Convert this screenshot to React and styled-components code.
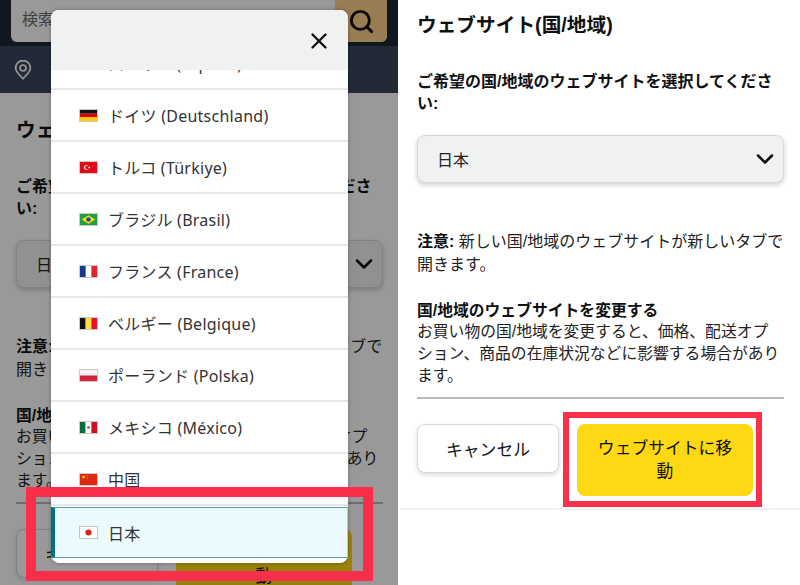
import React from 'react'
import styled, { createGlobalStyle } from 'styled-components'
import { Search, X, ChevronDown } from 'lucide-react'

const GlobalStyle = createGlobalStyle`
  html, body {
    margin: 0;
    padding: 0;
    background: #fff;
  }
  body {
    font-family: "Liberation Sans", "Noto Sans CJK JP", sans-serif;
    color: #0f1111;
  }
  * { box-sizing: border-box; }
`

const Page = styled.div`
  width: 800px;
  height: 585px;
  display: grid;
  grid-template-columns: 398px 400px;
  column-gap: 2px;
  overflow: hidden;
`

const Phone = styled.div`
  position: relative;
  height: 585px;
  overflow: hidden;
  background: #fff;
`

const TopBar = styled.div`
  height: 46px;
  background: #1b2737;
  display: flex;
  padding: 0 11px 4px;
`

const SearchBox = styled.div`
  flex: 1;
  display: flex;
  background: #fff;
  border-radius: 0 0 6px 6px;
  overflow: hidden;
`

const SearchHint = styled.div`
  flex: 1;
  padding-left: 11px;
  line-height: 40px;
  font-size: 16px;
  color: #6b6b6b;
`

const SearchButton = styled.div`
  width: 52px;
  background: #ffd089;
  display: flex;
  align-items: center;
  justify-content: center;
  color: #111;
`

const LocationBar = styled.div`
  height: 47px;
  background: #37475a;
  display: flex;
  align-items: center;
  padding-left: 14px;
  color: #fff;
`

const FormWrap = styled.section`
  padding: ${p => p.$top}px ${p => p.$right}px 12px ${p => p.$left}px;
  border-bottom: 2px solid #f0f0f0;
`

const Title = styled.h1`
  margin: 0 0 33px;
  font-size: 19.7px;
  line-height: 26px;
  font-weight: 700;
`

const Label = styled.p`
  margin: 0 0 20px;
  font-size: 16px;
  line-height: 22px;
  font-weight: 700;
`

const SelectBox = styled.div`
  height: 48px;
  padding: 0 4px 0 19px;
  display: flex;
  align-items: center;
  justify-content: space-between;
  background: #f0f2f2;
  border: 1px solid #d5d9d9;
  border-radius: 8px;
  box-shadow: 0 2px 5px rgba(15, 17, 17, 0.2);
  font-size: 16px;
  color: #222;
`

const Note = styled.p`
  margin: 47px 0 24px;
  font-size: 16px;
  line-height: 23px;
  color: #222;
  b { color: #0f1111; }
`

const Change = styled.div`
  font-size: 15.8px;
  line-height: 22px;
  color: #222;
  padding-bottom: 10px;
  border-bottom: 2px solid #b8b8b8;
  b { display: block; line-height: 21px; color: #0f1111; }
`

const Actions = styled.div`
  display: flex;
  align-items: flex-start;
  gap: 18px;
  margin-top: 25px;
`

const CancelButton = styled.button`
  width: 142px;
  height: 49px;
  background: #fff;
  border: 1px solid #d5d9d9;
  border-radius: 8px;
  box-shadow: 0 2px 5px rgba(15, 17, 17, 0.15);
  font: inherit;
  font-size: 16.8px;
  color: #0f1111;
`

const GoButton = styled.button`
  width: 176px;
  height: 72px;
  padding: 0 20px;
  background: #ffd814;
  border: none;
  border-radius: 8px;
  font: inherit;
  font-size: 16.8px;
  line-height: 23px;
  color: #0f1111;
`

const Dim = styled.div`
  position: absolute;
  inset: 0;
  background: rgba(0, 0, 0, 0.4);
`

const Modal = styled.div`
  position: absolute;
  left: 51px;
  top: 10px;
  width: 297px;
  height: 553px;
  background: #fff;
  border-radius: 8px;
  overflow: hidden;
  box-shadow: 0 0 4px rgba(0, 0, 0, 0.3);
  display: flex;
  flex-direction: column;
`

const ModalHead = styled.div`
  flex: none;
  height: 60px;
  background: #f0f2f2;
  display: flex;
  align-items: center;
  justify-content: flex-end;
  padding: 2px 16px 0 0;
  color: #111;
`

const List = styled.div`
  flex: 1;
  overflow: hidden;
`

const Row = styled.div`
  height: 52px;
  display: flex;
  align-items: center;
  gap: 10px;
  padding-left: 28px;
  border-bottom: 2px solid #e7e7e7;
  font-family: "Noto Sans", "Noto Sans CJK JP", sans-serif;
  font-size: 16px;
  letter-spacing: 0.25px;
  color: #333;
  &:first-child { margin-top: -32px; }
`

const SelectedRow = styled(Row)`
  height: 51px;
  margin-top: 1px;
  padding-left: 24px;
  background: #ebfbfd;
  border: 1px solid #5f9ea8;
  border-left: 4px solid #007185;
  border-right-color: #b9c9cc;
`

const Flag = styled.svg`
  width: 19px;
  height: 13px;
  flex: none;
  border: 1px solid rgba(90, 80, 60, 0.3);
`

const Callout = styled.div`
  position: absolute;
  left: ${p => p.$x}px;
  top: ${p => p.$y}px;
  width: ${p => p.$w}px;
  height: ${p => p.$h}px;
  border: ${p => p.$line}px solid #fb2f4a;
`

const flags = {
  es: <><rect width="19" height="13" fill="#c60b1e" /><rect y="3.2" width="19" height="6.6" fill="#ffc400" /></>,
  de: <><rect width="19" height="4.4" fill="#111" /><rect y="4.4" width="19" height="4.3" fill="#d00" /><rect y="8.7" width="19" height="4.3" fill="#fc0" /></>,
  tr: <><rect width="19" height="13" fill="#e30a17" /><circle cx="7" cy="6.5" r="2.6" fill="#fff" /><circle cx="7.8" cy="6.5" r="2" fill="#e30a17" /><circle cx="10.4" cy="6.5" r="0.9" fill="#fff" /></>,
  br: <><rect width="19" height="13" fill="#229e45" /><path d="M9.5 1.5 17 6.5 9.5 11.5 2 6.5Z" fill="#f8e509" /><circle cx="9.5" cy="6.5" r="2.6" fill="#2b49a3" /></>,
  fr: <><rect width="19" height="13" fill="#fff" /><rect width="6.3" height="13" fill="#14398f" /><rect x="12.7" width="6.3" height="13" fill="#e1232f" /></>,
  be: <><rect width="6.3" height="13" fill="#111" /><rect x="6.3" width="6.4" height="13" fill="#fae042" /><rect x="12.7" width="6.3" height="13" fill="#e8112d" /></>,
  pl: <><rect width="19" height="6.5" fill="#f4f4f4" /><rect y="6.5" width="19" height="6.5" fill="#d4213d" /></>,
  mx: <><rect width="6.3" height="13" fill="#0b6b3a" /><rect x="6.3" width="6.4" height="13" fill="#fff" /><rect x="12.7" width="6.3" height="13" fill="#ce1126" /><circle cx="9.5" cy="6.5" r="1.6" fill="#7a5a35" /></>,
  cn: <><rect width="19" height="13" fill="#de2910" /><circle cx="4" cy="3.6" r="1.6" fill="#ffde00" /><circle cx="7.5" cy="1.8" r="0.5" fill="#ffde00" /><circle cx="8.4" cy="3.4" r="0.5" fill="#ffde00" /><circle cx="8.2" cy="5.4" r="0.5" fill="#ffde00" /></>,
  jp: <><rect width="19" height="13" fill="#fff" /><circle cx="9.5" cy="6.5" r="3.5" fill="#d7261c" /></>,
}

const countries = [
  ['es', 'スペイン (España)'],
  ['de', 'ドイツ (Deutschland)'],
  ['tr', 'トルコ (Türkiye)'],
  ['br', 'ブラジル (Brasil)'],
  ['fr', 'フランス (France)'],
  ['be', 'ベルギー (Belgique)'],
  ['pl', 'ポーランド (Polska)'],
  ['mx', 'メキシコ (México)'],
  ['cn', '中国'],
]

function CountryFlag({ code }) {
  return <Flag viewBox="0 0 19 13" preserveAspectRatio="none">{flags[code]}</Flag>
}

function SiteForm({ top, left, right }) {
  return (
    <FormWrap $top={top} $left={left} $right={right}>
      <Title>ウェブサイト(国/地域)</Title>
      <Label>ご希望の国/地域のウェブサイトを選択してください:</Label>
      <SelectBox>
        日本
        <ChevronDown size={28} strokeWidth={2.2} color="#111" />
      </SelectBox>
      <Note><b>注意:</b> 新しい国/地域のウェブサイトが新しいタブで開きます。</Note>
      <Change>
        <b>国/地域のウェブサイトを変更する</b>
        お買い物の国/地域を変更すると、価格、配送オプション、商品の在庫状況などに影響する場合があります。
      </Change>
      <Actions>
        <CancelButton>キャンセル</CancelButton>
        <GoButton>ウェブサイトに移動</GoButton>
      </Actions>
    </FormWrap>
  )
}

export default function App() {
  return (
    <Page>
      <GlobalStyle />
      <Phone>
        <TopBar>
          <SearchBox>
            <SearchHint>検索 Amazon.co.jp</SearchHint>
            <SearchButton><Search size={27} strokeWidth={2.6} /></SearchButton>
          </SearchBox>
        </TopBar>
        <LocationBar>
          <svg width="18" height="20" viewBox="0 0 18 20" fill="none" stroke="currentColor" strokeWidth="1.7">
            <path d="M9 18.6C5 14.6 1.6 11.6 1.6 8a7.4 7.4 0 0 1 14.8 0c0 3.6-3.4 6.6-7.4 10.6Z" />
            <circle cx="9" cy="8" r="3" />
          </svg>
        </LocationBar>
        <SiteForm top={24} left={16} right={15} />
        <Dim />
        <Modal>
          <ModalHead><X size={26} strokeWidth={2.2} /></ModalHead>
          <List>
            {countries.map(([code, name]) => (
              <Row key={code}>
                <CountryFlag code={code} />
                {name}
              </Row>
            ))}
            <SelectedRow>
              <CountryFlag code="jp" />
              日本
            </SelectedRow>
          </List>
        </Modal>
        <Callout $x={26} $y={487} $w={347} $h={94} $line={10} />
      </Phone>
      <Phone>
        <SiteForm top={12} left={17} right={16} />
        <Callout $x={163} $y={412} $w={199} $h={95} $line={6} />
      </Phone>
    </Page>
  )
}
